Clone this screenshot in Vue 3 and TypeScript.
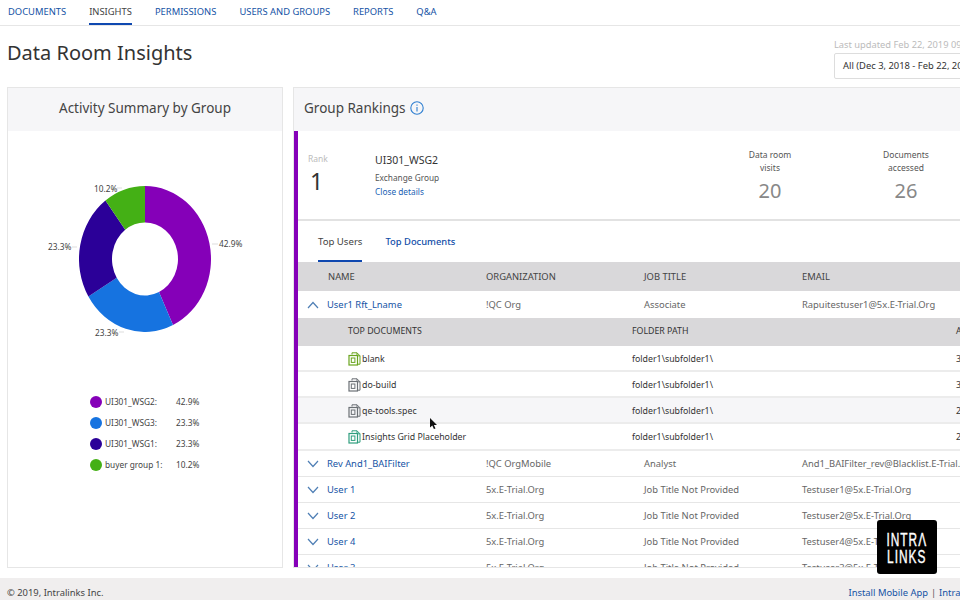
<script setup lang="ts">
type Slice = { name: string; pct: number; color: string }
const slices: Slice[] = [
  { name: 'UI301_WSG2:', pct: 42.9, color: '#8500b8' },
  { name: 'UI301_WSG3:', pct: 23.3, color: '#1673e0' },
  { name: 'UI301_WSG1:', pct: 23.3, color: '#2b0098' },
  { name: 'buyer group 1:', pct: 10.2, color: '#44b015' },
]
const total = slices.reduce((s, x) => s + x.pct, 0)
const cx = 66, cy = 73, rx = 66, ry = 73, ix = 33, iy = 36.5
function pt(a: number, x: number, y: number) {
  return `${(cx + x * Math.sin(a)).toFixed(2)} ${(cy - y * Math.cos(a)).toFixed(2)}`
}
let acc = 0
const arcs = slices.map((s) => {
  const a0 = (acc / total) * Math.PI * 2
  acc += s.pct
  const a1 = (acc / total) * Math.PI * 2
  const large = a1 - a0 > Math.PI ? 1 : 0
  return {
    color: s.color,
    d: `M${pt(a0, rx, ry)}A${rx} ${ry} 0 ${large} 1 ${pt(a1, rx, ry)}L${pt(a1, ix, iy)}A${ix} ${iy} 0 ${large} 0 ${pt(a0, ix, iy)}Z`,
  }
})
const tabs = ['DOCUMENTS', 'INSIGHTS', 'PERMISSIONS', 'USERS AND GROUPS', 'REPORTS', 'Q&A']
const docs = [
  { name: 'blank', color: '#6aa51e', count: '3', alt: false, last: false },
  { name: 'do-build', color: '#6b7075', count: '3', alt: false, last: false },
  { name: 'qe-tools.spec', color: '#6b7075', count: '2', alt: true, last: false },
  { name: 'Insights Grid Placeholder', color: '#2f9e7e', count: '2', alt: false, last: true },
]
const users = [
  { name: 'Rev And1_BAIFilter', org: '!QC OrgMobile', job: 'Analyst', email: 'And1_BAIFilter_rev@Blacklist.E-Trial.Org' },
  { name: 'User 1', org: '5x.E-Trial.Org', job: 'Job Title Not Provided', email: 'Testuser1@5x.E-Trial.Org' },
  { name: 'User 2', org: '5x.E-Trial.Org', job: 'Job Title Not Provided', email: 'Testuser2@5x.E-Trial.Org' },
  { name: 'User 4', org: '5x.E-Trial.Org', job: 'Job Title Not Provided', email: 'Testuser4@5x.E-Trial.Org' },
  { name: 'User 3', org: '5x.E-Trial.Org', job: 'Job Title Not Provided', email: 'Testuser3@5x.E-Trial.Org' },
]
</script>

<template>
  <div class="page">
    <nav class="nav">
      <a v-for="t in tabs" :key="t" class="nav-item" :class="{ active: t === 'INSIGHTS' }">{{ t }}</a>
    </nav>
    <header class="head">
      <h1>Data Room Insights</h1>
      <div class="updated">
        <div class="stamp">Last updated Feb 22, 2019 09:30 AM</div>
        <div class="select">All (Dec 3, 2018 - Feb 22, 2019)</div>
      </div>
    </header>
    <main class="main">
      <section class="panel left">
        <div class="panel-head center">Activity Summary by Group</div>
        <div class="chart">
          <svg class="donut" width="132" height="146" viewBox="0 0 132 146">
            <path v-for="a in arcs" :key="a.color" :d="a.d" :fill="a.color" />
          </svg>
          <svg class="leaders" width="276" height="226" viewBox="0 0 276 226">
            <path d="M204 113h6M64 116h5M111 201h5M109 57h5" stroke="#ddd" fill="none" />
          </svg>
          <span class="lbl l1">42.9%</span>
          <span class="lbl l2">23.3%</span>
          <span class="lbl l3">23.3%</span>
          <span class="lbl l4">10.2%</span>
        </div>
        <ul class="legend">
          <li v-for="s in slices" :key="s.name">
            <i class="dot" :style="{ background: s.color }"></i>
            <span class="lname">{{ s.name }}</span>
            <span>{{ s.pct.toFixed(1) }}%</span>
          </li>
        </ul>
      </section>
      <section class="panel right">
        <div class="panel-head">
          Group Rankings
          <svg class="info" width="14" height="14" viewBox="0 0 14 14">
            <circle cx="7" cy="7" r="6.2" fill="none" stroke="#2f7fd1" stroke-width="1.1" />
            <path d="M7 6v4.4M7 3.6v1.2" stroke="#2f7fd1" stroke-width="1.1" fill="none" />
          </svg>
        </div>
        <div class="body">
          <div class="summary">
            <div class="rank"><small>Rank</small><strong>1</strong></div>
            <div class="group">
              <b>UI301_WSG2</b>
              <span>Exchange Group</span>
              <a>Close details</a>
            </div>
            <div class="stat"><span>Data room<br />visits</span><strong>20</strong></div>
            <div class="stat"><span>Documents<br />accessed</span><strong>26</strong></div>
          </div>
          <div class="subtabs">
            <span class="subtab on">Top Users</span>
            <span class="subtab">Top Documents</span>
          </div>
          <div class="row thead">
            <span class="indent">NAME</span><span>ORGANIZATION</span><span>JOB TITLE</span><span>EMAIL</span>
          </div>
          <div class="row user first">
            <span class="name">
              <svg class="chev" width="12" height="8" viewBox="0 0 12 8"><path d="M1 7l5-5.5L11 7" /></svg>
              <a>User1 Rft_Lname</a>
            </span>
            <span>!QC Org</span><span>Associate</span><span>Rapuitestuser1@5x.E-Trial.Org</span>
          </div>
          <div class="docrow dhead">
            <span>TOP DOCUMENTS</span><span>FOLDER PATH</span><span>ACCESSED</span>
          </div>
          <div v-for="d in docs" :key="d.name" class="docrow doc" :class="{ alt: d.alt, last: d.last }">
            <span class="dname">
              <svg class="file" width="13" height="14" viewBox="0 0 13 14" fill="none" :stroke="d.color">
                <path d="M4 2.5V.8h5l3 3v8.4H9.5" />
                <path d="M9 .8v3h3" />
                <rect x="1" y="3.5" width="8.5" height="9.5" stroke-width="1.2" />
                <rect x="3.3" y="6" width="3.6" height="4.4" />
              </svg>
              {{ d.name }}
            </span>
            <span class="path">folder1\subfolder1\</span>
            <span>{{ d.count }}</span>
          </div>
          <div v-for="u in users" :key="u.name" class="row user">
            <span class="name">
              <svg class="chev" width="12" height="8" viewBox="0 0 12 8"><path d="M1 1l5 5.5L11 1" /></svg>
              <a>{{ u.name }}</a>
            </span>
            <span>{{ u.org }}</span><span>{{ u.job }}</span><span>{{ u.email }}</span>
          </div>
        </div>
      </section>
    </main>
    <footer class="foot">
      <span>© 2019, Intralinks Inc.</span>
      <span class="links"><a>Install Mobile App</a><i>|</i><a>Intralinks Privacy Policy</a></span>
    </footer>
    <svg class="cursor" width="9" height="14" viewBox="0 0 9 14"><path d="M1 1v9.5l2.3-2 1.6 3.6 1.6-.7-1.6-3.5H8z" fill="#111" /></svg>
    <div class="logo"><span>INTRΛ</span><span>LINKS</span></div>
  </div>
</template>

<style>
html, body { margin: 0; overflow: hidden; background: #fff; }
</style>

<style scoped>
.page {
  position: relative;
  width: 960px;
  height: 600px;
  overflow: hidden;
  font-family: "Noto Sans", sans-serif;
  color: #444;
  background: #fff;
  display: flex;
  flex-direction: column;
}
a { color: #0f4da8; }
.nav {
  height: 25px;
  flex: none;
  display: flex;
  gap: 23px;
  padding-left: 8px;
  border-bottom: 1px solid #e6e6e6;
}
.nav-item {
  font-size: 9.4px;
  line-height: 24px;
  height: 25px;
  box-sizing: border-box;
  color: #1553a5;
}
.nav-item.active { color: #444; border-bottom: 2px solid #0f48b0; }
.head {
  height: 61px;
  flex: none;
  display: flex;
  justify-content: space-between;
  width: 1130px;
  box-sizing: border-box;
  padding: 0 8px 0 7px;
}
h1 {
  margin: 11px 0 0;
  font-size: 20px;
  line-height: 32px;
  font-weight: 400;
  color: #333;
}
.updated { width: 288px; padding-top: 12px; }
.stamp { font-size: 9.3px; line-height: 13px; color: #bbb; white-space: nowrap; }
.select {
  margin-top: 2px;
  height: 26px;
  box-sizing: border-box;
  border: 1px solid #ddd;
  border-radius: 2px;
  padding-left: 8px;
  font-size: 9.4px;
  line-height: 24px;
  color: #333;
  white-space: nowrap;
}
.main {
  flex: none;
  height: 481px;
  width: 1130px;
  display: flex;
  gap: 10px;
  padding-left: 7px;
  box-sizing: border-box;
}
.panel {
  border: 1px solid #e6e6e6;
  box-sizing: border-box;
  height: 481px;
  overflow: hidden;
}
.left { width: 276px; flex: none; }
.right { flex: 1; }
.panel-head {
  height: 43px;
  background: #f6f6f8;
  font-size: 13.5px;
  line-height: 41px;
  color: #444;
  padding-left: 10px;
}
.center { text-align: center; padding-left: 0; }
.info { vertical-align: -2px; margin-left: 1px; }
.chart { position: relative; height: 226px; }
.donut { position: absolute; left: 71px; top: 55px; }
.leaders { position: absolute; left: 0; top: 0; }
.lbl { position: absolute; font-size: 8.3px; line-height: 12px; color: #444; }
.l1 { left: 211px; top: 107px; }
.l2 { left: 87px; top: 196px; }
.l3 { left: 40px; top: 110px; }
.l4 { left: 86px; top: 52px; }
.legend {
  list-style: none;
  margin: 34px 0 0;
  padding: 0 0 0 82px;
}
.legend li {
  display: flex;
  align-items: center;
  height: 21px;
  font-size: 8.3px;
  color: #444;
}
.dot { width: 12px; height: 12px; border-radius: 50%; margin-right: 3px; flex: none; }
.lname { width: 71px; }
.body {
  border-left: 4px solid #8500b8;
  height: 437px;
  overflow: hidden;
}
.summary {
  height: 90px;
  box-sizing: border-box;
  border-bottom: 2px solid #e2e2e2;
  display: flex;
  align-items: flex-start;
}
.rank { width: 77px; flex: none; padding: 22px 0 0 10px; box-sizing: border-box; }
.rank small { display: block; font-size: 8.5px; line-height: 12px; color: #bbb; }
.rank strong { display: block; font-size: 23px; line-height: 28px; font-weight: 400; color: #333; margin-top: 2px; padding-left: 2px; }
.group { width: 330px; flex: none; padding-top: 20px; display: flex; flex-direction: column; }
.group b { font-weight: 400; font-size: 10.5px; line-height: 18px; color: #333; }
.group span { font-size: 8.3px; line-height: 15px; color: #555; margin-top: 1px; }
.group a { font-size: 8.3px; line-height: 13px; color: #1a5fb4; }
.stat { width: 136px; flex: none; text-align: center; padding-top: 17px; margin-left: -3px; margin-right: 3px; }
.stat span { display: block; font-size: 8.5px; line-height: 13px; color: #555; }
.stat strong { display: block; font-size: 20px; line-height: 25px; font-weight: 400; color: #888; margin-top: 4px; }
.subtabs { height: 41px; display: flex; gap: 23px; padding-left: 20px; box-sizing: border-box; }
.subtab { font-size: 9.4px; line-height: 41px; height: 41px; box-sizing: border-box; color: #0f4da8; font-weight: 500; }
.subtab.on { font-size: 9.6px; color: #444; font-weight: 400; border-bottom: 2px solid #0f48b0; }
.row {
  display: grid;
  grid-template-columns: 188px 158px 158px 1fr;
  align-items: center;
  font-size: 9.4px;
  color: #666;
  white-space: nowrap;
  box-sizing: border-box;
}
.thead { height: 29px; background: #d9d8da; color: #444; font-size: 9.4px; }
.indent { padding-left: 30px; }
.user { height: 26px; border-bottom: 1px solid #e6e6e6; }
.user.first { height: 27px; border-bottom: 0; }
.name { display: flex; align-items: center; gap: 8px; padding-left: 9px; }
.name a { color: #1553a5; }
.chev { fill: none; stroke: #4f7fb5; stroke-width: 1.2; flex: none; }
.docrow {
  display: grid;
  grid-template-columns: 284px 324px 100px;
  align-items: center;
  white-space: nowrap;
  box-sizing: border-box;
  padding-left: 50px;
  font-size: 8.8px;
  color: #333;
}
.dhead { height: 28px; padding-bottom: 2px; background: #d9d8da; }
.doc { height: 26px; padding-top: 1px; border-bottom: 2px solid #ececec; }
.doc.last { height: 27px; }
.doc.alt { background: #f6f6f8; }
.dname { display: flex; align-items: center; gap: 1px; }
.file { flex: none; }
.foot {
  margin-top: 10px;
  flex: 1;
  width: 1130px;
  box-sizing: border-box;
  background: #f0eeee;
  display: flex;
  justify-content: flex-start;
  padding: 8px 0 0 7px;
  font-size: 9.4px;
  line-height: 14px;
  color: #444;
}
.links { margin-left: 745px; white-space: nowrap; }
.links a { color: #1553a5; }
.links i { font-style: normal; margin: 0 3px; color: #555; }
.cursor { position: absolute; left: 429px; top: 417px; }
.logo {
  position: absolute;
  left: 877px;
  top: 520px;
  width: 60px;
  height: 54px;
  box-sizing: border-box;
  padding-top: 3px;
  background: #000;
  border-radius: 3px;
  color: #fff;
  display: flex;
  flex-direction: column;
  align-items: center;
  justify-content: center;
  font-family: "Liberation Sans", sans-serif;
  font-size: 18px;
  line-height: 17px;
  letter-spacing: 1.5px;
  -webkit-text-stroke: 0.4px #fff;
}
.logo span { display: block; transform: scaleX(0.66); }
</style>
